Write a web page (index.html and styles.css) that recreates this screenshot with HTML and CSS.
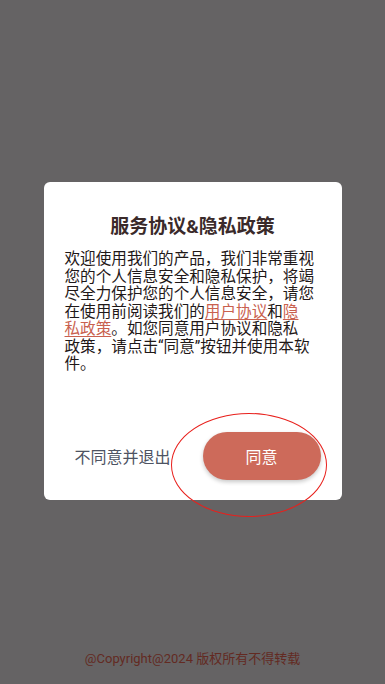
FILE: index.html
```html
<!DOCTYPE html>
<html lang="zh-CN">
<head>
<meta charset="utf-8">
<link rel="stylesheet" href="styles.css">
</head>
<body>
<div class="screen">
  <div class="card">
    <h1 class="title">服务协议&amp;隐私政策</h1>
    <p class="content">欢迎使用我们的产品，我们非常重视您的个人信息安全和隐私保护，将竭尽全力保护您的个人信息安全，请您在使用前阅读我们的<a class="link">用户协议</a>和<a class="link">隐<br>私政策</a>。如您同意用户协议和隐私<br>政策，请点击“同意”按钮并使用本软件。</p>
    <div class="actions">
      <span class="btn-refuse">不同意并退出</span>
      <span class="btn-agree">同意</span>
    </div>
  </div>
  <div class="ring"></div>
  <div class="footer">@Copyright@2024 版权所有不得转载</div>
</div>
</body>
</html>
```

FILE: styles.css
```css
html, body {
  margin: 0;
  padding: 0;
}
body {
  background: #656364;
  font-family: "Roboto", "Noto Sans CJK SC", sans-serif;
}
.screen {
  position: relative;
  width: 385px;
  height: 684px;
  box-sizing: border-box;
  padding-top: 182px;
  display: flex;
  flex-direction: column;
  align-items: center;
}
.card {
  width: 298px;
  height: 318px;
  box-sizing: border-box;
  background: #ffffff;
  border-radius: 6px;
  padding: 33px 24px 20px 21px;
  display: flex;
  flex-direction: column;
}
.title {
  margin: 0;
  font-size: 19px;
  line-height: 24px;
  font-weight: 700;
  color: #3a2a2a;
  text-align: center;
  padding-left: 3px;
}
.content {
  margin: 12px 0 0;
  font-size: 15.6px;
  line-height: 17.5px;
  color: #1f1818;
}
.link {
  color: #c9614f;
  text-decoration: underline;
  text-underline-offset: 2px;
}
.actions {
  margin-top: auto;
  display: flex;
  align-items: center;
  justify-content: space-between;
  padding-left: 10px;
  margin-right: -3px;
}
.btn-refuse {
  font-size: 16px;
  color: #4d5362;
}
.btn-agree {
  width: 118px;
  height: 48px;
  border-radius: 24px;
  background: #cd6a5a;
  color: #ffffff;
  font-size: 16px;
  display: flex;
  align-items: center;
  justify-content: center;
  box-shadow: 0 2px 4px rgba(0, 0, 0, 0.22);
}
.ring {
  position: absolute;
  left: 171px;
  top: 413px;
  width: 156px;
  height: 104px;
  box-sizing: border-box;
  border: 1px solid #e8201c;
  border-radius: 50%;
}
.footer {
  margin-top: auto;
  margin-bottom: 16px;
  font-size: 13px;
  line-height: 18px;
  color: #632a22;
}
```
